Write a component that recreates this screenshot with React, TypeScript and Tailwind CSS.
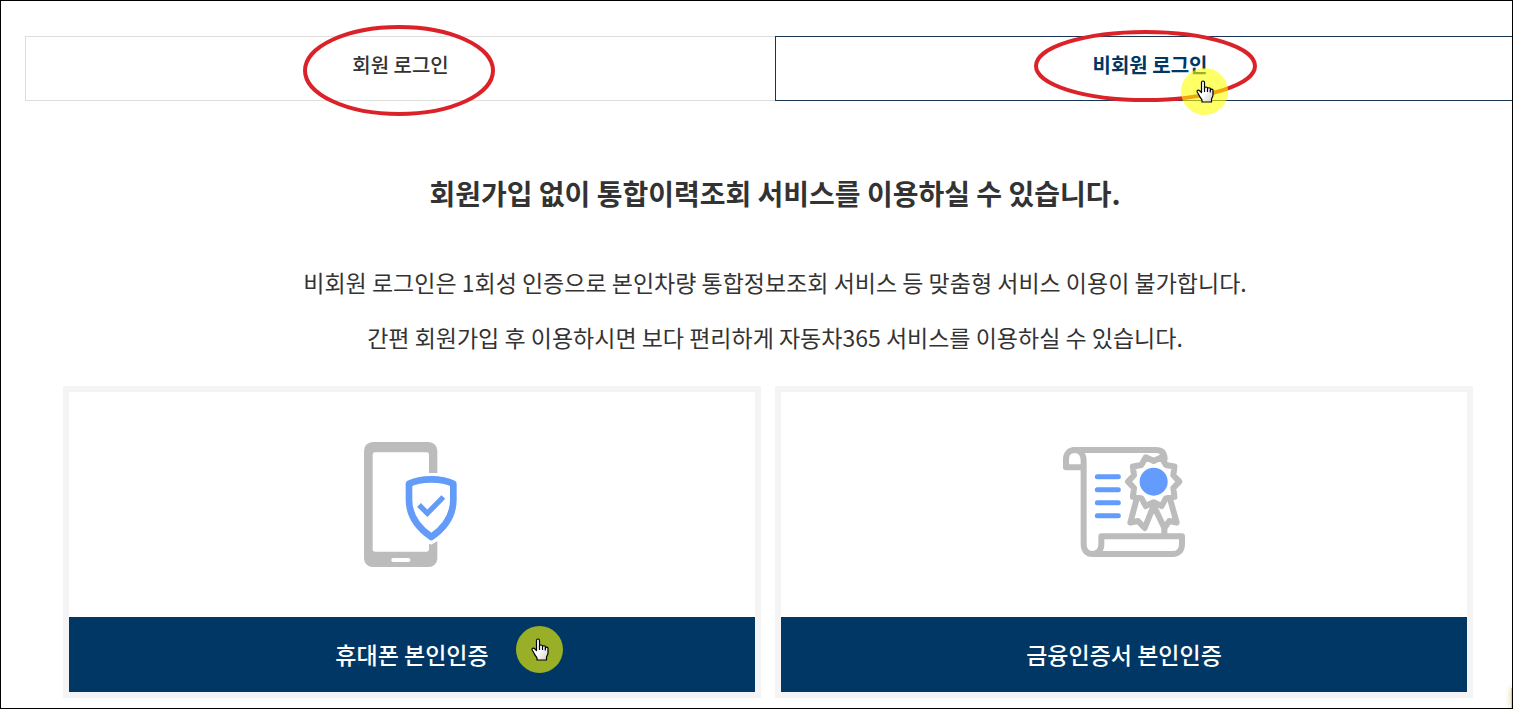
import { useState } from "react"

const HandPointer = () => (
  <svg width="18" height="23" viewBox="0 0 18 23" aria-hidden="true">
    <defs>
      <linearGradient id="hand" x1="0" y1="0" x2="1" y2="1">
        <stop offset="0.5" stopColor="white" />
        <stop offset="1" stopColor="#cfcfcf" />
      </linearGradient>
    </defs>
    <path
      d="M5.5 12.500V2.600a1.500 1.600 0 0 1 3 0V8.200a1.500 1.300 0 0 1 3 .2V8.800a1.400 1.200 0 0 1 2.800.3V10a1.400 1.300 0 0 1 2.700.4V15c0 1.600-1.500 3.300-1.500 4.600V22h-9.500v-2c-.9-1.600-2.200-3-2.800-4.500L1.200 12c-.7-1.600 1.300-2.600 2.500-1.200z"
      fill="url(#hand)"
      stroke="black"
      strokeWidth="1.200"
      strokeLinejoin="round"
    />
    <path d="M8.500 8v4M11.500 9v3M14.300 10v2.500" stroke="black" strokeWidth="1.200" fill="none" />
  </svg>
)

const ClickSpot = () => (
  <span className="flex w-[47px] h-[47px] items-center justify-center rounded-full bg-[#ffff00]/60">
    <HandPointer />
  </span>
)

const PhoneIcon = () => (
  <svg width="97" height="125" viewBox="71 36 291 375" aria-hidden="true">
    <rect x="71" y="36" width="220" height="375" rx="26" fill="#bcbcbc" />
    <rect x="97" y="67" width="169" height="298" rx="7" fill="white" />
    <rect x="153" y="384" width="57" height="12" rx="5" fill="white" />
    <path d="M264 130h40v212h-40z" fill="white" />
    <path d="M266 342h25v-8l-25 12z" fill="#bcbcbc" />
    <path
      d="M273 148c26 0 48 4 66 13v48c0 48-28 86-66 112-38-26-67-64-67-112v-48c18-9 41-13 67-13z"
      fill="white"
      stroke="white"
      strokeWidth="38"
    />
    <path
      d="M273 148c26 0 48 4 66 13v48c0 48-28 86-66 112-38-26-67-64-67-112v-48c18-9 41-13 67-13z"
      fill="white"
      stroke="#639bf8"
      strokeWidth="20"
      strokeLinejoin="round"
    />
    <path d="M236 225l25 25 48-49" fill="none" stroke="#639bf8" strokeWidth="16" />
  </svg>
)

const CertificateIcon = () => (
  <svg width="123" height="125" viewBox="39 21 369 375" aria-hidden="true">
    <g fill="none" stroke="#bcbcbc" strokeWidth="18" strokeLinejoin="round" strokeLinecap="round">
      <path d="M74 45H318c16 0 25 9 26 26" />
      <path d="M74 45c-17 0-26 12-26 28v24h52" />
      <path d="M74 45c17 0 27 14 27 34V328c0 18 10 29 26 29s27-11 27-29V304H396v22c0 20-10 31-28 31H127" />
      <path d="M343 275v27" />
      <path d="M259 195l-18 68 23-5 20 21 27-67 32 67 15-21 22 5-19-68" />
      <path
        d="M311 78L334.800 66.800L347.400 89.800L373.300 94.700L370 120.800L388 140L370 159.200L373.300 185.300L347.400 190.200L334.800 213.200L311 202L287.200 213.200L274.600 190.200L248.700 185.300L252 159.200L234 140L252 120.800L248.700 94.700L274.600 89.800L287.200 66.800z"
        fill="white"
      />
    </g>
    <circle cx="311" cy="140" r="42" fill="#639bff" />
    <path d="M142 125h63M142 164h63M142 203h63M142 242h63" stroke="#639bff" strokeWidth="15" strokeLinecap="round" />
  </svg>
)

const tabs = [
  { id: "member", label: "회원 로그인" },
  { id: "guest", label: "비회원 로그인" },
]

const methods = [
  { id: "phone", label: "휴대폰 본인인증", icon: <PhoneIcon /> },
  { id: "certificate", label: "금융인증서 본인인증", icon: <CertificateIcon /> },
]

const App = () => {
  const [active, setActive] = useState("guest")

  return (
    <div className="relative min-h-screen overflow-hidden border border-black bg-white pt-[35px] pb-2.5 font-['Noto_Sans_CJK_KR',sans-serif] text-[#333]">
      <main className="ml-6 -mr-[13px]">
        <div className="grid grid-cols-2">
          {tabs.map((tab) => (
            <div key={tab.id} className="relative">
              <button
                type="button"
                aria-pressed={active === tab.id}
                onClick={() => setActive(tab.id)}
                className={
                  active === tab.id
                    ? "block w-full h-[65px] border border-[#173553] pb-2 text-xl font-bold text-[#003764]"
                    : "block w-full h-[65px] border border-r-0 border-[#ddd] pb-2 text-xl font-medium"
                }
              >
                {tab.label}
              </button>
              {tab.id === "member" ? (
                <svg
                  className="pointer-events-none absolute left-[278px] -top-[11px]"
                  width="192"
                  height="91"
                  viewBox="0 0 192 91"
                  aria-hidden="true"
                >
                  <ellipse cx="96" cy="45.500" rx="94" ry="43.500" fill="none" stroke="#dc2229" strokeWidth="4" />
                </svg>
              ) : (
                <svg
                  className="pointer-events-none absolute left-[259px] -top-[6px]"
                  width="223"
                  height="72"
                  viewBox="0 0 223 72"
                  aria-hidden="true"
                >
                  <ellipse cx="111.500" cy="36" rx="109.500" ry="34" fill="none" stroke="#dc2229" strokeWidth="4" />
                </svg>
              )}
              {tab.id === "guest" && (
                <span className="pointer-events-none absolute left-[406px] top-8">
                  <ClickSpot />
                </span>
              )}
            </div>
          ))}
        </div>

        <h1 className="mt-[72px] text-center text-[28px] leading-10 font-bold">
          회원가입 없이 통합이력조회 서비스를 이용하실 수 있습니다.
        </h1>
        <div className="mt-[42px] text-center text-[23px] leading-[55px]">
          <p>비회원 로그인은 1회성 인증으로 본인차량 통합정보조회 서비스 등 맞춤형 서비스 이용이 불가합니다.</p>
          <p>간편 회원가입 후 이용하시면 보다 편리하게 자동차365 서비스를 이용하실 수 있습니다.</p>
        </div>

        <div className="mt-[21px] ml-[38px] mr-[52px] grid grid-cols-2 gap-3.5">
          {methods.map((method) => (
            <section key={method.id} className="border-[6px] border-[#f4f4f4]">
              <div className="flex h-[225px] items-center justify-center">{method.icon}</div>
              <button
                type="button"
                className="relative block w-full h-[75px] bg-[#003764] text-[23px] font-medium text-white"
              >
                {method.label}
                {method.id === "phone" && (
                  <span className="pointer-events-none absolute left-[447px] top-[9px]">
                    <ClickSpot />
                  </span>
                )}
              </button>
            </section>
          ))}
        </div>
      </main>
      <div className="absolute -right-1 bottom-0 h-5 w-[5px] bg-[#f0c860] shadow-[0_0_6px_#e0cc90]" />
    </div>
  )
}

export default App
